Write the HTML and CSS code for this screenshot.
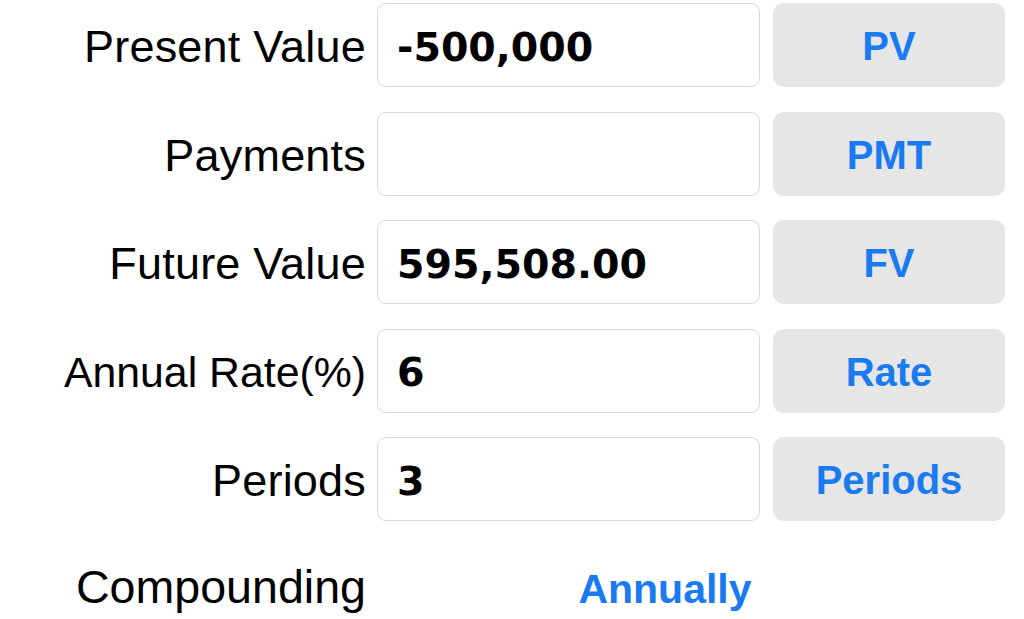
FILE: index.html
```html
<!DOCTYPE html>
<html>
<head>
<meta charset="utf-8">
<link rel="stylesheet" href="styles.css">
</head>
<body>
<div class="form">
  <div class="row">
    <div class="label">Present Value</div>
    <div class="field">-500,000</div>
    <div class="btn">PV</div>
  </div>
  <div class="row">
    <div class="label">Payments</div>
    <div class="field"></div>
    <div class="btn">PMT</div>
  </div>
  <div class="row">
    <div class="label">Future Value</div>
    <div class="field">595,508.00</div>
    <div class="btn">FV</div>
  </div>
  <div class="row">
    <div class="label label-narrow">Annual Rate(%)</div>
    <div class="field">6</div>
    <div class="btn">Rate</div>
  </div>
  <div class="row">
    <div class="label">Periods</div>
    <div class="field">3</div>
    <div class="btn">Periods</div>
  </div>
  <div class="row row-compound">
    <div class="label label-wide">Compounding</div>
    <div class="choice">Annually</div>
  </div>
</div>
</body>
</html>
```
FILE: styles.css
```css
html, body {
  margin: 0;
  padding: 0;
  background: #ffffff;
}
body {
  width: 1024px;
  height: 619px;
  overflow: hidden;
  font-family: "Liberation Sans", Arial, sans-serif;
  color: #000;
}
.form {
  display: flex;
  flex-direction: column;
  gap: 24.5px;
  padding-top: 3px;
}
.row {
  display: flex;
  align-items: center;
  height: 84px;
}
.label {
  width: 366px;
  flex: none;
  text-align: right;
  font-size: 45px;
  letter-spacing: 0.2px;
  white-space: nowrap;
  margin-right: 11px;
  padding-top: 4px;
}
.label-narrow {
  font-size: 42.8px;
  letter-spacing: 0;
}
.label-wide {
  font-size: 46.6px;
  letter-spacing: 0;
}
.field {
  box-sizing: border-box;
  width: 383px;
  height: 84px;
  flex: none;
  border: 1px solid #d8d8d8;
  border-radius: 9px;
  display: flex;
  align-items: center;
  padding-left: 19px;
  padding-top: 3px;
  font-family: "DejaVu Sans", sans-serif;
  font-weight: bold;
  font-size: 39.5px;
}
.btn {
  box-sizing: border-box;
  width: 232px;
  height: 84px;
  flex: none;
  margin-left: 13px;
  background: #e6e6e6;
  border-radius: 11px;
  display: flex;
  align-items: center;
  justify-content: center;
  color: #1a7af0;
  font-weight: bold;
  font-size: 40px;
  padding-top: 3px;
}
.row-compound {
  margin-top: -14px;
  height: 100px;
  padding-top: 3px;
}
.choice {
  width: 576px;
  text-align: center;
  color: #1a7af0;
  font-weight: bold;
  font-size: 41px;
  padding-top: 9px;
}
```
